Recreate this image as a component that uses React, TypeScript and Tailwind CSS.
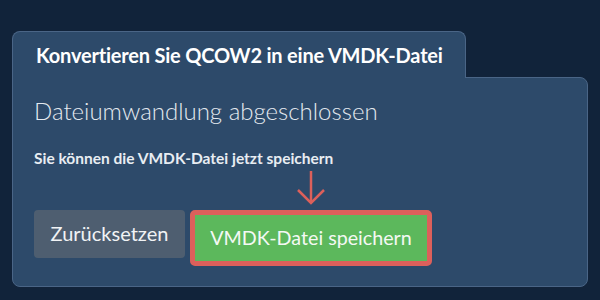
export default function App() {
  return (
    <div
      className="w-[600px] h-[300px] bg-[#11233a] pt-[31px] px-[12px]"
      style={{ fontFamily: "Lato, 'Open Sans', sans-serif" }}
    >
      {/* Tab */}
      <div className="relative z-10 -mb-px w-[454px] h-[47px] flex items-center pl-[23px] bg-[#2d4a6a] border border-b-0 border-[#4a6586] rounded-t-[8px]">
        <h1 className="text-[20px] font-bold text-white tracking-[-0.2px]">
          Konvertieren Sie QCOW2 in eine VMDK-Datei
        </h1>
      </div>

      {/* Body */}
      <div className="w-[576px] h-[210px] bg-[#2d4a6a] border border-[#4a6586] rounded-b-[8px] rounded-tr-[8px] pl-[21px] pt-[18px]">
        <h2 className="text-[24px] font-light leading-[30px] text-[#e4e9ef]">
          Dateiumwandlung abgeschlossen
        </h2>
        <p className="mt-[22px] text-[15.5px] font-bold leading-[20px] text-[#e8edf2]">
          Sie können die VMDK-Datei jetzt speichern
        </p>

        <div className="mt-[42px] flex items-start gap-[5px]">
          <button className="w-[151px] h-[48px] rounded-[4px] bg-[#4e5e70] text-[20px] text-[#f1f3f5] pb-[2px]">
            Zurücksetzen
          </button>

          <div className="relative">
            {/* Arrow */}
            <svg
              className="absolute bottom-full left-1/2 -translate-x-1/2 mb-[4px]"
              width="30"
              height="36"
              viewBox="0 0 30 36"
              fill="none"
              stroke="#dc605b"
              strokeWidth="2.5"
            >
              <path d="M15 1 L15 33" />
              <path d="M2 20 L15 33 L28 20" />
            </svg>
            <div className="w-[242px] h-[56px] border-[5px] border-[#dc605b] rounded-[5px]">
              <button className="w-full h-full bg-[#5cb85c] text-[19.7px] text-[#f4f8f4]">
                VMDK-Datei speichern
              </button>
            </div>
          </div>
        </div>
      </div>
    </div>
  );
}
